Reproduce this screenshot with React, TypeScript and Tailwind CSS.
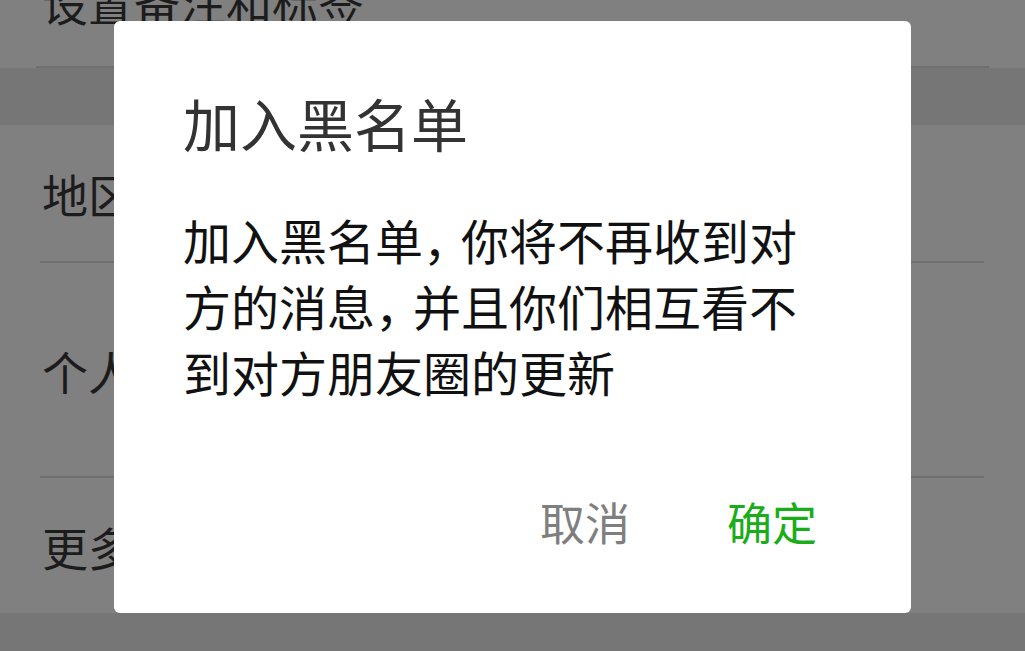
import React from "react";

const FONT = { fontFamily: '"Noto Sans CJK SC", "Noto Sans", sans-serif' };

function Divider({ inset = 40 }: { inset?: number }) {
  return (
    <div className={inset === 36 ? "ml-[36px] mr-[36px] h-[2px] bg-[#6f6f6f]" : "ml-[40px] mr-[41px] h-[2px] bg-[#6f6f6f]"} />
  );
}

function Row({ label, height }: { label: string; height: string }) {
  return (
    <div className={`flex items-center bg-[#808080] pl-[42px] ${height}`}>
      <span className="text-[46px] leading-[46px] text-[#1c1c1c]">{label}</span>
    </div>
  );
}

// full-width comma is drawn tighter in the dialog body
const Comma = () => <span className="tracking-[-10px]">，</span>;

export default function App() {
  return (
    <div className="relative h-[651px] w-full overflow-hidden bg-[#767676]" style={FONT}>
      {/* dimmed profile settings list underneath */}
      <div className="flex flex-col">
        <div className="flex h-[66px] items-start bg-[#808080] pl-[42px]">
          <span className="-mt-[22px] text-[46px] leading-[46px] text-[#1c1c1c]">设置备注和标签</span>
        </div>
        <div className="bg-[#808080]">
          <Divider inset={36} />
        </div>
        <div className="h-[57px] bg-[#767676]" />
        <Row label="地区" height="h-[136px]" />
        <div className="bg-[#808080]">
          <Divider />
        </div>
        <Row label="个人相册" height="h-[213px]" />
        <div className="bg-[#808080]">
          <Divider />
        </div>
        <Row label="更多信息" height="h-[135px]" />
      </div>

      {/* blacklist confirm dialog */}
      <div className="absolute left-[114px] top-[21px] flex h-[592px] w-[797px] flex-col rounded-[6px] bg-white pl-[69px] pt-[73px]">
        <h2 className="text-[57px] font-normal leading-[57px] text-[#333333]">加入黑名单</h2>
        <p className="mt-[55px] w-[650px] text-[48px] leading-[66px] text-[#111111]">
          加入黑名单<Comma />你将不再收到对方的消息<Comma />并且你们相互看不到对方朋友圈的更新
        </p>
        <div className="mt-[95px] flex justify-end gap-[97px] pr-[94px]">
          <button className="text-[45px] leading-[45px] text-[#7f7f7f]">取消</button>
          <button className="text-[45px] leading-[45px] text-[#1aad19]">确定</button>
        </div>
      </div>
    </div>
  );
}
